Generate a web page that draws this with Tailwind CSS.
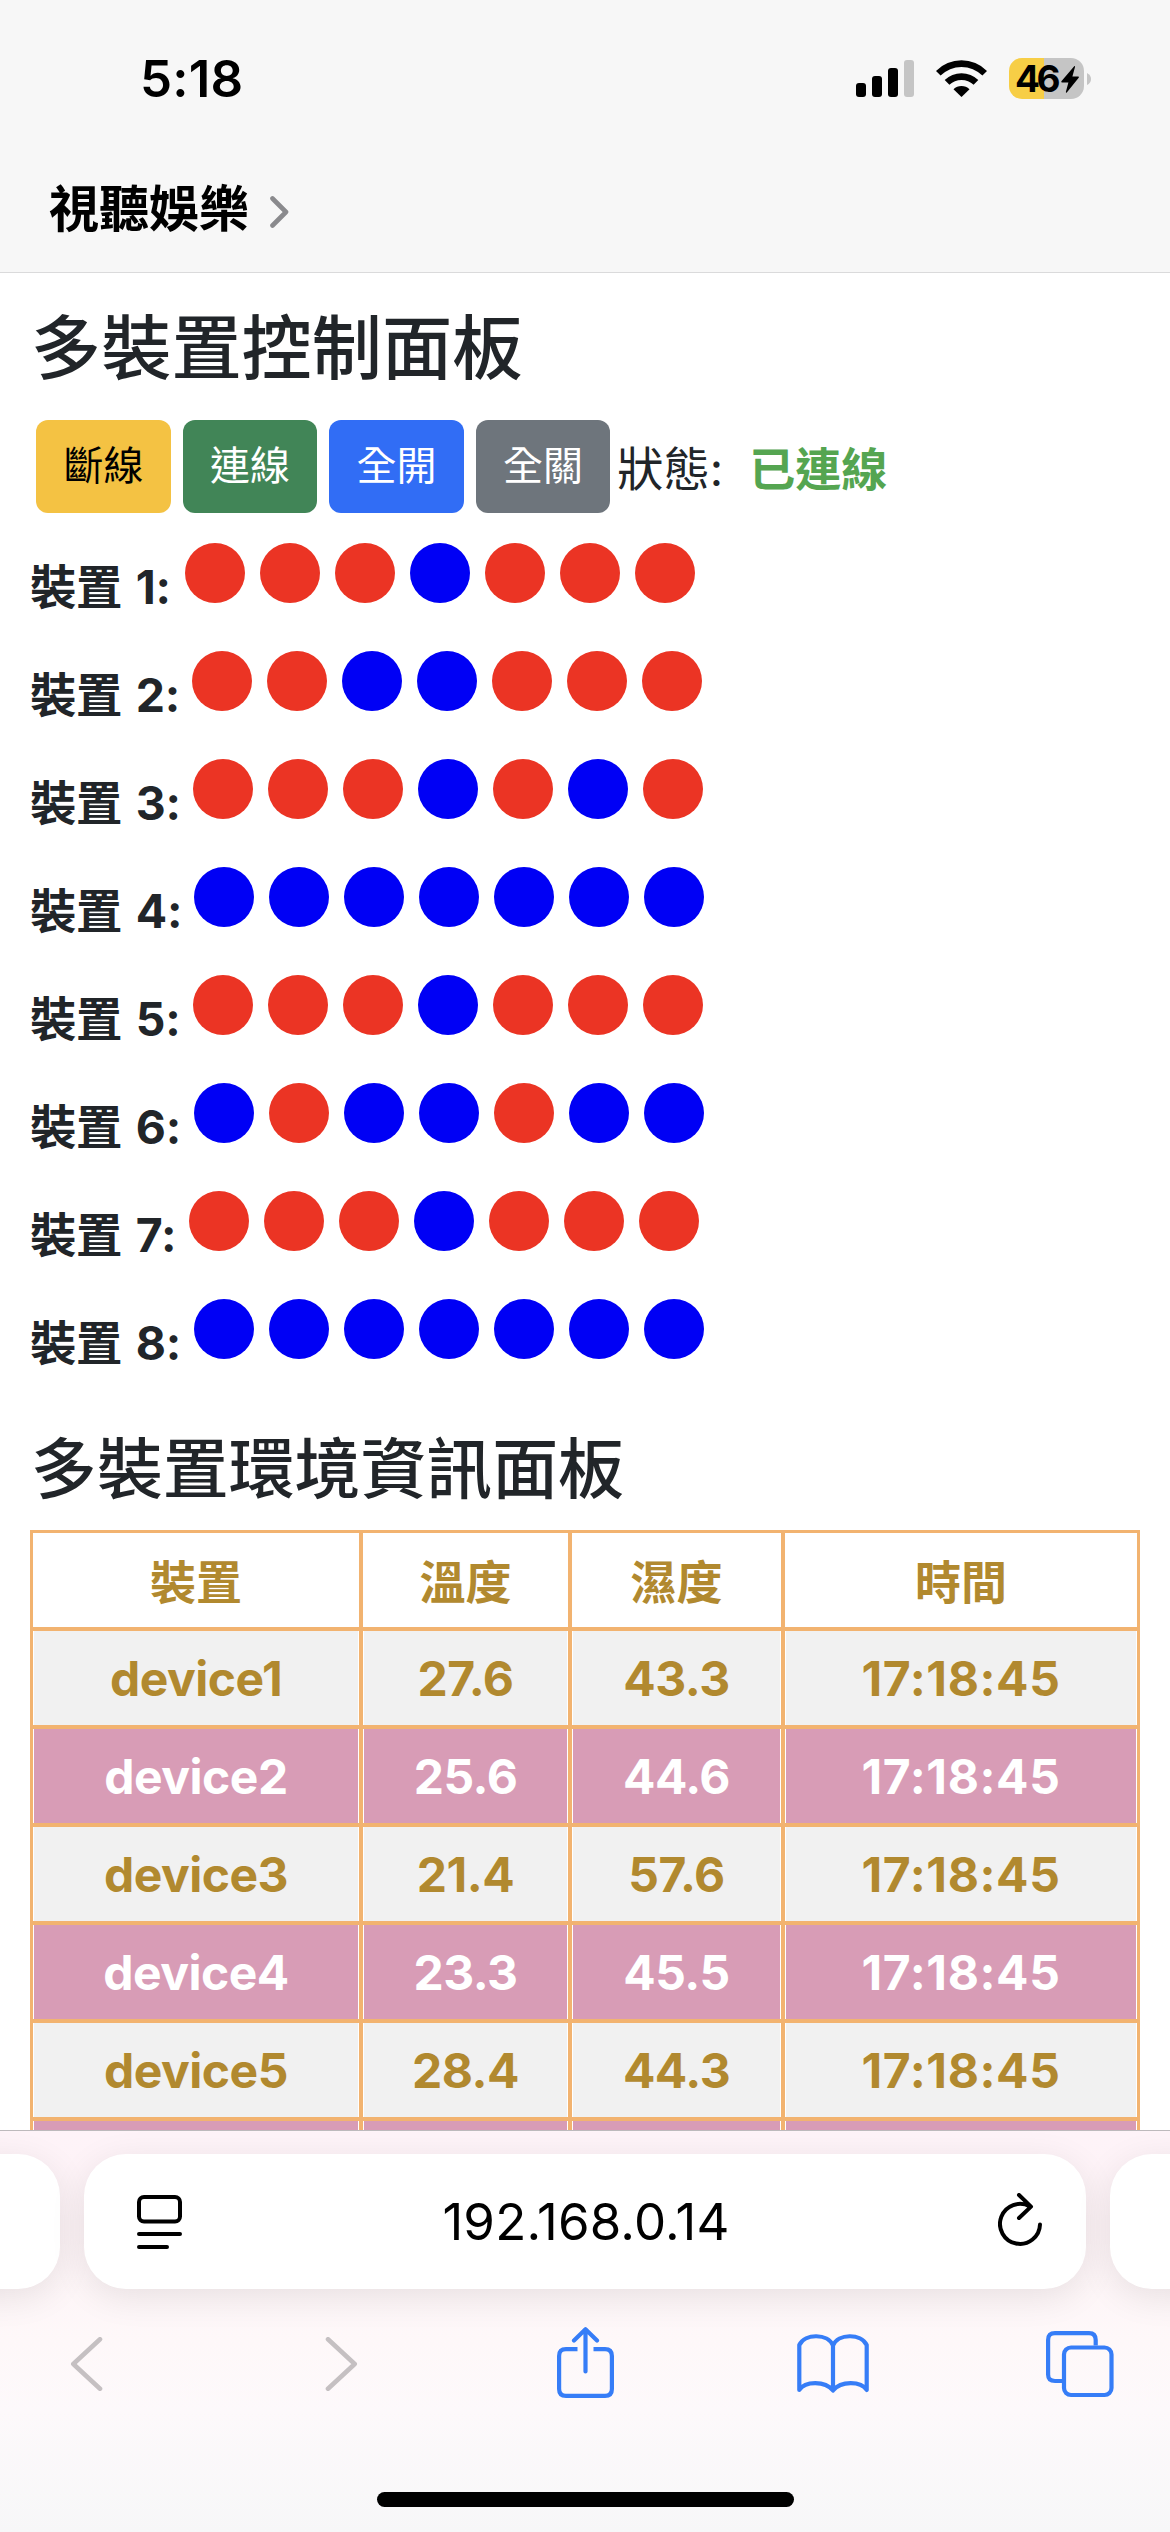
<!DOCTYPE html>
<html lang="zh-Hant">
<head>
<meta charset="utf-8">
<title>多裝置控制面板</title>
<script src="https://cdn.jsdelivr.net/npm/@tailwindcss/browser@4"></script>
</head>
<body class="flex h-[2532px] w-[1170px] flex-col overflow-hidden bg-white font-['Inter','Noto_Sans_CJK_TC',sans-serif] text-[#212529]">

<!-- Status bar and app link -->
<header class="h-[273px] shrink-0 border-b border-[#dadadb] bg-[#f7f7f7] text-black">
  <div class="flex h-[156px] items-center pl-[140px] pr-[86px]">
    <span class="text-[51px] font-semibold leading-none tracking-[0.2px]">5:18</span>
    <svg class="ml-auto" width="58" height="37" viewBox="0 0 58 37">
      <rect x="0" y="23" width="10" height="14" rx="3"/><rect x="16" y="16" width="10" height="21" rx="3"/>
      <rect x="32" y="8" width="10" height="29" rx="3"/><rect x="48" y="0" width="10" height="37" rx="3" fill="#c5c5c5"/>
    </svg>
    <svg class="ml-[22px]" width="51" height="37" viewBox="0 0 51 37">
      <path d="M0 10.9A36 36 0 0 1 51 10.9L46.4 15.6A29.5 29.5 0 0 0 4.6 15.6Z"/>
      <path d="M8.7 20A24 24 0 0 1 42.3 20L37.6 24.8A17.5 17.5 0 0 0 13.4 24.8Z"/>
      <path d="M17.5 29.2A11.6 11.6 0 0 1 33.5 29.2L25.5 37Z"/>
    </svg>
    <div class="relative ml-[22px] flex h-[41px] w-[75px] items-center rounded-[13px] bg-[linear-gradient(to_right,#f7ce46_35px,#c5c5c5_35px)] pl-[6px]">
      <span class="text-[37px] font-bold leading-none tracking-[-3.4px]">46</span>
      <svg class="absolute left-[52px] top-[8px]" width="18" height="27" viewBox="0 0 18 27"><path d="M13.2 .3Q14.2-.3 14 1L11.4 10.4H17.2Q18.4 10.6 17.7 11.7L6 26.2Q4.8 27.5 4.9 25.8L7.4 16.5H1Q-.3 16.2 .6 15Z"/></svg>
      <svg class="absolute left-[78px] top-[15px]" width="4" height="12" viewBox="0 0 4 12"><path d="M0 0Q4 2 4 6T0 12Z" fill="#c5c5c5"/></svg>
    </div>
  </div>
  <div class="flex h-[104px] items-center pl-[49px]">
    <span class="mt-[2px] text-[50px] font-bold leading-none">視聽娛樂</span>
    <svg class="ml-[21px] mt-[8px]" width="19" height="32" viewBox="0 0 19 32" fill="none" stroke="#8a8a8d" stroke-width="4.6" stroke-linecap="round" stroke-linejoin="round"><path d="M2.5 2.5 16 16 2.5 29.5"/></svg>
  </div>
</header>

<main class="h-[1857px] shrink-0 overflow-hidden px-[30px] pt-[38px]">
  <h1 class="h-[109px] pl-[1px] text-[70.2px] font-medium leading-[76px]">多裝置控制面板</h1>

  <div class="flex h-[93px] items-center pl-[6px] text-[46.4px]">
    <div class="flex h-full gap-[12px] text-[40px] text-white">
      <button class="w-[135px] rounded-[12px] bg-[#f4c243] pb-[2px] text-black">斷線</button>
      <button class="w-[134px] rounded-[12px] bg-[#418557] pb-[2px]">連線</button>
      <button class="w-[135px] rounded-[12px] bg-[#316df5] pb-[2px]">全開</button>
      <button class="w-[134px] rounded-[12px] bg-[#6e757c] pb-[2px]">全關</button>
    </div>
    <span class="ml-[7px] mt-[5px] leading-none">狀態:</span>
    <span class="ml-[26px] mt-[5px] text-[46px] font-bold leading-none text-[#55a551]">已連線</span>
  </div>

  <section id="devices" class="mt-[30px]"></section>

  <h2 class="mt-[24px] h-[99px] pl-[1px] text-[65.9px] font-medium leading-[76px]">多裝置環境資訊面板</h2>

  <section id="readings" class="grid w-[1110px] auto-rows-[94px] grid-cols-[326px_205px_209px_352px] gap-[4px] border-[3px] border-[#f2b370] bg-[#f2b370] text-center text-[48px] font-bold leading-[96px] tracking-[-0.5px] text-[#b1892f]">
    <div class="bg-white pt-px text-[46px] tracking-normal">裝置</div>
    <div class="bg-white pt-px text-[46px] tracking-normal">溫度</div>
    <div class="bg-white pt-px text-[46px] tracking-normal">濕度</div>
    <div class="bg-white pt-px text-[46px] tracking-normal">時間</div>
  </section>
</main>

<!-- Browser toolbar -->
<footer class="flex h-[402px] shrink-0 flex-col overflow-hidden border-t border-[#bdb9bc] bg-[linear-gradient(to_bottom,#fef3f8_0px,#fdf3f6_100px,#fef8f9_210px,#fdf9fb_280px,#f7f7f8_401px)]">
  <div class="mt-[23px] flex h-[135px] w-[1170px] shrink-0 gap-[24px]">
    <div class="-ml-[60px] w-[120px] shrink-0 rounded-[42px] bg-white shadow-[0_8px_36px_rgba(0,0,0,0.09)]"></div>
    <div class="flex w-[1002px] shrink-0 items-center rounded-[42px] bg-white pl-[53px] pr-[43px] text-black shadow-[0_8px_36px_rgba(0,0,0,0.09)]">
      <svg width="45" height="54" viewBox="0 0 45 54" fill="none" stroke="#000" stroke-width="4" stroke-linecap="round"><rect x="2" y="2" width="41" height="24.5" rx="5"/><path d="M2 39H43M2 52H30"/></svg>
      <span class="flex-1 pr-[8px] text-center text-[51px] leading-none tracking-[0.2px]">192.168.0.14</span>
      <svg class="mb-[4px]" width="45" height="54" viewBox="0 0 45 54" fill="none" stroke="#000" stroke-width="4" stroke-linecap="round" stroke-linejoin="round"><path d="M42 31.5A20 20 0 1 1 32 13.6M21 2 33 13.6 21 25"/></svg>
    </div>
    <div class="w-[120px] shrink-0 rounded-[42px] bg-white shadow-[0_8px_36px_rgba(0,0,0,0.09)]"></div>
  </div>
  <nav class="mt-[38px] flex h-[74px] items-start pl-[70px] text-[#367df7]">
    <svg class="mt-[10px]" width="33" height="54" viewBox="0 0 33 54" fill="none" stroke="#c5c0c2" stroke-width="4.6" stroke-linecap="round" stroke-linejoin="round"><path d="M30 2.3 3.3 27 30 51.7"/></svg>
    <svg class="ml-[222px] mt-[10px]" width="33" height="54" viewBox="0 0 33 54" fill="none" stroke="#c5c0c2" stroke-width="4.6" stroke-linecap="round" stroke-linejoin="round"><path d="M3 2.3 29.7 27 3 51.7"/></svg>
    <svg class="ml-[199px]" width="57" height="71" viewBox="0 0 57 71" fill="none" stroke="currentColor" stroke-width="4.2" stroke-linecap="round" stroke-linejoin="round"><path stroke-linecap="butt" d="M20.5 22.1H9Q2.1 22.1 2.1 29V62Q2.1 68.9 9 68.9H48Q54.9 68.9 54.9 62V29Q54.9 22.1 48 22.1H36.5"/><path d="M28.5 44.5V2.5M17 13.5 28.5 2.3 40 13.5"/></svg>
    <svg class="ml-[183px] mt-[7px]" width="72" height="60" viewBox="0 0 72 60" fill="none" stroke="currentColor" stroke-width="4.2" stroke-linejoin="round"><path d="M36 11.500C31 -.5 8 -1 2.300 11V56C8 47 28 46.500 36 56.500 44 46.500 64 47 69.700 56V11C64 -1 41 -.5 36 11.500V56"/></svg>
    <svg class="ml-[177px] mt-[4px]" width="68" height="67" viewBox="0 0 68 67" fill="none" stroke="currentColor" stroke-width="4.2"><rect x="18" y="16.5" width="47.5" height="47.5" rx="7"/><path d="M16 50H9Q2.1 50 2.1 43.5V9Q2.1 2.1 9 2.1H43Q49.7 2.1 49.7 9V14.5"/></svg>
  </nav>
  <div class="mx-auto mt-[91px] h-[15px] w-[417px] shrink-0 rounded-full bg-black"></div>
</footer>

<script>
  // r = red lamp, b = blue lamp; the number is the label's width
  const devices = [
    ["rrrbrrr", 155], ["rrbbrrr", 162], ["rrrbrbr", 163], ["bbbbbbb", 164],
    ["rrrbrrr", 163], ["brbbrbb", 164], ["rrrbrrr", 159], ["bbbbbbb", 164]
  ];
  const lamp = { r: "bg-[#eb3424]", b: "bg-[#0000f5]" };
  document.getElementById("devices").innerHTML = devices.map(([lamps, w], i) =>
    `<div class="flex h-[108px] items-start">
      <strong class="mt-[16px] shrink-0 whitespace-nowrap text-[46.4px] font-bold leading-[56px] tracking-[-0.3px] [word-spacing:3px]" style="width:${w}px">裝置 ${i + 1}:</strong>
      <div class="flex gap-[15px]">${[...lamps].map(c => `<span class="size-[60px] rounded-full ${lamp[c]}"></span>`).join("")}</div>
    </div>`).join("");

  const readings = [
    ["device1", "27.6", "43.3"], ["device2", "25.6", "44.6"], ["device3", "21.4", "57.6"],
    ["device4", "23.3", "45.5"], ["device5", "28.4", "44.3"], ["", "", "", ""]
  ];
  document.getElementById("readings").insertAdjacentHTML("beforeend", readings.map((r, i) =>
    (r.length === 3 ? [...r, "17:18:45"] : r).map((v, col) =>
      `<div class="border-x border-white ${i % 2 ? "bg-[#d89cb6] text-white" : "bg-[#f1f1f1]"} ${col === 3 ? "tracking-[0.6px]" : ""}">${v}</div>`).join("")).join(""));
</script>
</body>
</html>
